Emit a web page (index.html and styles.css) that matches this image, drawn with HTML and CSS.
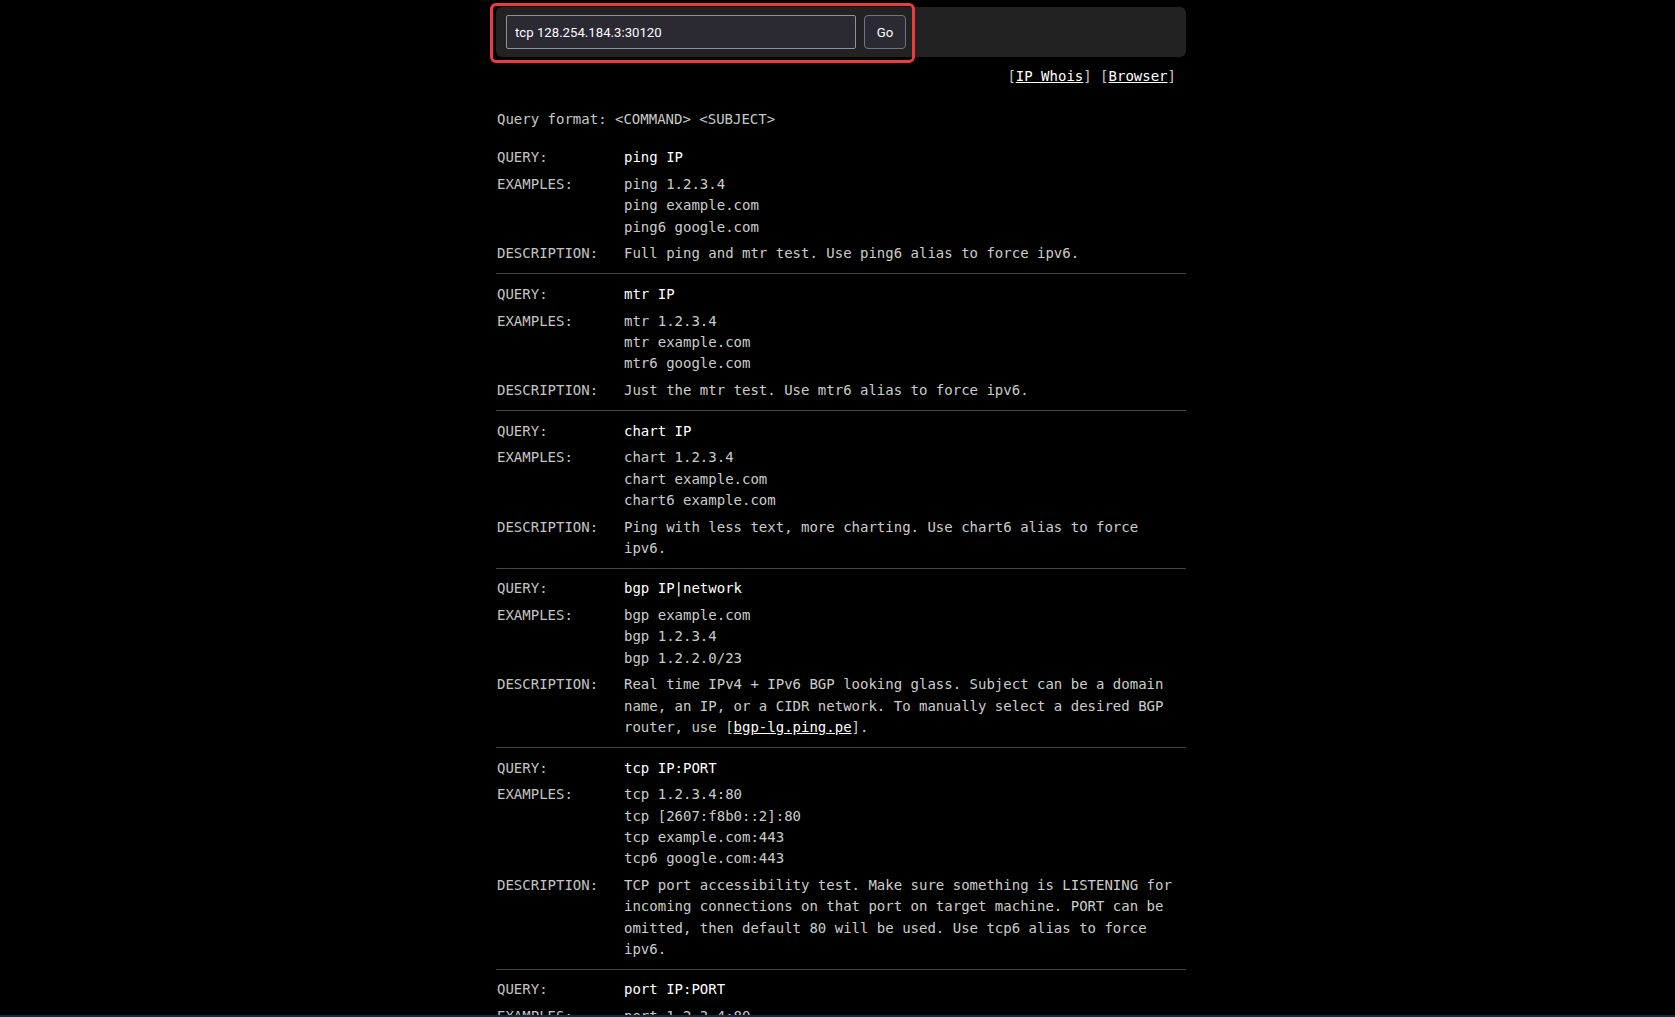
FILE: index.html
```html
<!DOCTYPE html>
<html lang="en">
<head>
<meta charset="utf-8">
<title>ping.pe</title>
<link rel="stylesheet" href="styles.css">
</head>
<body>
<div class="page">
  <main class="wrap">
    <form class="panel">
      <input class="q" type="text" value="tcp 128.254.184.3:30120">
      <button class="go" type="button">Go</button>
      <div class="mark"></div>
    </form>
    <div class="links">[<a href="#">IP Whois</a>] [<a href="#">Browser</a>]</div>
    <p class="fmt">Query format: &lt;COMMAND&gt; &lt;SUBJECT&gt;</p>

    <section class="cmd first">
      <div class="lbl">QUERY:</div><div class="val qv">ping IP</div>
      <div class="lbl">EXAMPLES:</div><div class="val">ping 1.2.3.4<br>ping example.com<br>ping6 google.com</div>
      <div class="lbl">DESCRIPTION:</div><div class="val">Full ping and mtr test. Use ping6 alias to force ipv6.</div>
    </section>

    <section class="cmd">
      <div class="lbl">QUERY:</div><div class="val qv">mtr IP</div>
      <div class="lbl">EXAMPLES:</div><div class="val">mtr 1.2.3.4<br>mtr example.com<br>mtr6 google.com</div>
      <div class="lbl">DESCRIPTION:</div><div class="val">Just the mtr test. Use mtr6 alias to force ipv6.</div>
    </section>

    <section class="cmd">
      <div class="lbl">QUERY:</div><div class="val qv">chart IP</div>
      <div class="lbl">EXAMPLES:</div><div class="val">chart 1.2.3.4<br>chart example.com<br>chart6 example.com</div>
      <div class="lbl">DESCRIPTION:</div><div class="val">Ping with less text, more charting. Use chart6 alias to force ipv6.</div>
    </section>

    <section class="cmd">
      <div class="lbl">QUERY:</div><div class="val qv">bgp IP|network</div>
      <div class="lbl">EXAMPLES:</div><div class="val">bgp example.com<br>bgp 1.2.3.4<br>bgp 1.2.2.0/23</div>
      <div class="lbl">DESCRIPTION:</div><div class="val">Real time IPv4 + IPv6 BGP looking glass. Subject can be a domain name, an IP, or a CIDR network. To manually select a desired BGP router, use [<a href="#">bgp-lg.ping.pe</a>].</div>
    </section>

    <section class="cmd">
      <div class="lbl">QUERY:</div><div class="val qv">tcp IP:PORT</div>
      <div class="lbl">EXAMPLES:</div><div class="val">tcp 1.2.3.4:80<br>tcp [2607:f8b0::2]:80<br>tcp example.com:443<br>tcp6 google.com:443</div>
      <div class="lbl">DESCRIPTION:</div><div class="val">TCP port accessibility test. Make sure something is LISTENING for incoming connections on that port on target machine. PORT can be omitted, then default 80 will be used. Use tcp6 alias to force ipv6.</div>
    </section>

    <section class="cmd">
      <div class="lbl">QUERY:</div><div class="val qv">port IP:PORT</div>
      <div class="lbl">EXAMPLES:</div><div class="val">port 1.2.3.4:80<br>port example.com:443<br>port6 google.com:443</div>
      <div class="lbl">DESCRIPTION:</div><div class="val">Quick TCP port check from all locations. Use port6 alias to force ipv6.</div>
    </section>
  </main>
</div>
<div class="edge"></div>
</body>
</html>
```

FILE: styles.css
```css
html { scrollbar-width: none; }
html::-webkit-scrollbar { display: none; }

body {
  margin: 0;
  background: #000;
  color: #c8c8c8;
  font-family: "DejaVu Sans Mono", "Liberation Mono", monospace;
  font-size: 14px;
  line-height: 21.3px;
}

.page {
  display: flex;
  justify-content: center;
  padding-left: 7px;
}

.wrap {
  width: 690px;
  padding-top: 7px;
}

.panel {
  position: relative;
  display: flex;
  align-items: center;
  gap: 8px;
  height: 50px;
  box-sizing: border-box;
  padding: 0 10px;
  background: #222222;
  border-radius: 6px;
  margin: 0;
}

.q {
  width: 350px;
  height: 34px;
  box-sizing: border-box;
  margin: 0;
  padding: 0 8px;
  background: #2b2a33;
  border: 1px solid #8f8f9d;
  border-radius: 2px;
  color: #fbfbfe;
  font-family: "Roboto", "Liberation Sans", sans-serif;
  font-size: 13.2px;
  outline: none;
}

.go {
  width: 42px;
  height: 34px;
  margin: 0;
  padding: 0;
  background: #2b2a33;
  border: 1px solid #74747e;
  border-radius: 4px;
  color: #fbfbfe;
  font-family: "Roboto", "Liberation Sans", sans-serif;
  font-size: 13.2px;
}

.mark {
  position: absolute;
  left: -6px;
  top: -4px;
  width: 425px;
  height: 60px;
  box-sizing: border-box;
  border: 3px solid #ec3b41;
  border-radius: 6px;
  pointer-events: none;
}

.links {
  margin-top: 9px;
  padding-right: 10px;
  text-align: right;
  color: #c8c8c8;
}

.links a, .val a {
  color: #ffffff;
  text-decoration: underline;
}

.fmt {
  margin: 21.7px 0 0;
  padding-left: 1px;
}

.cmd {
  display: grid;
  grid-template-columns: 128px 1fr;
  row-gap: 5.4px;
  padding: 9.75px 0 8.6px;
  border-top: 1px solid #444444;
}

.cmd.first {
  border-top: none;
  margin-top: 7.3px;
}

.lbl {
  padding-left: 1px;
  color: #c4c4c4;
}

.val {
  color: #cccccc;
}

.qv {
  color: #ffffff;
}

.edge {
  position: fixed;
  left: 0;
  right: 0;
  bottom: 0;
  height: 2px;
  background: #24223a;
}
```
